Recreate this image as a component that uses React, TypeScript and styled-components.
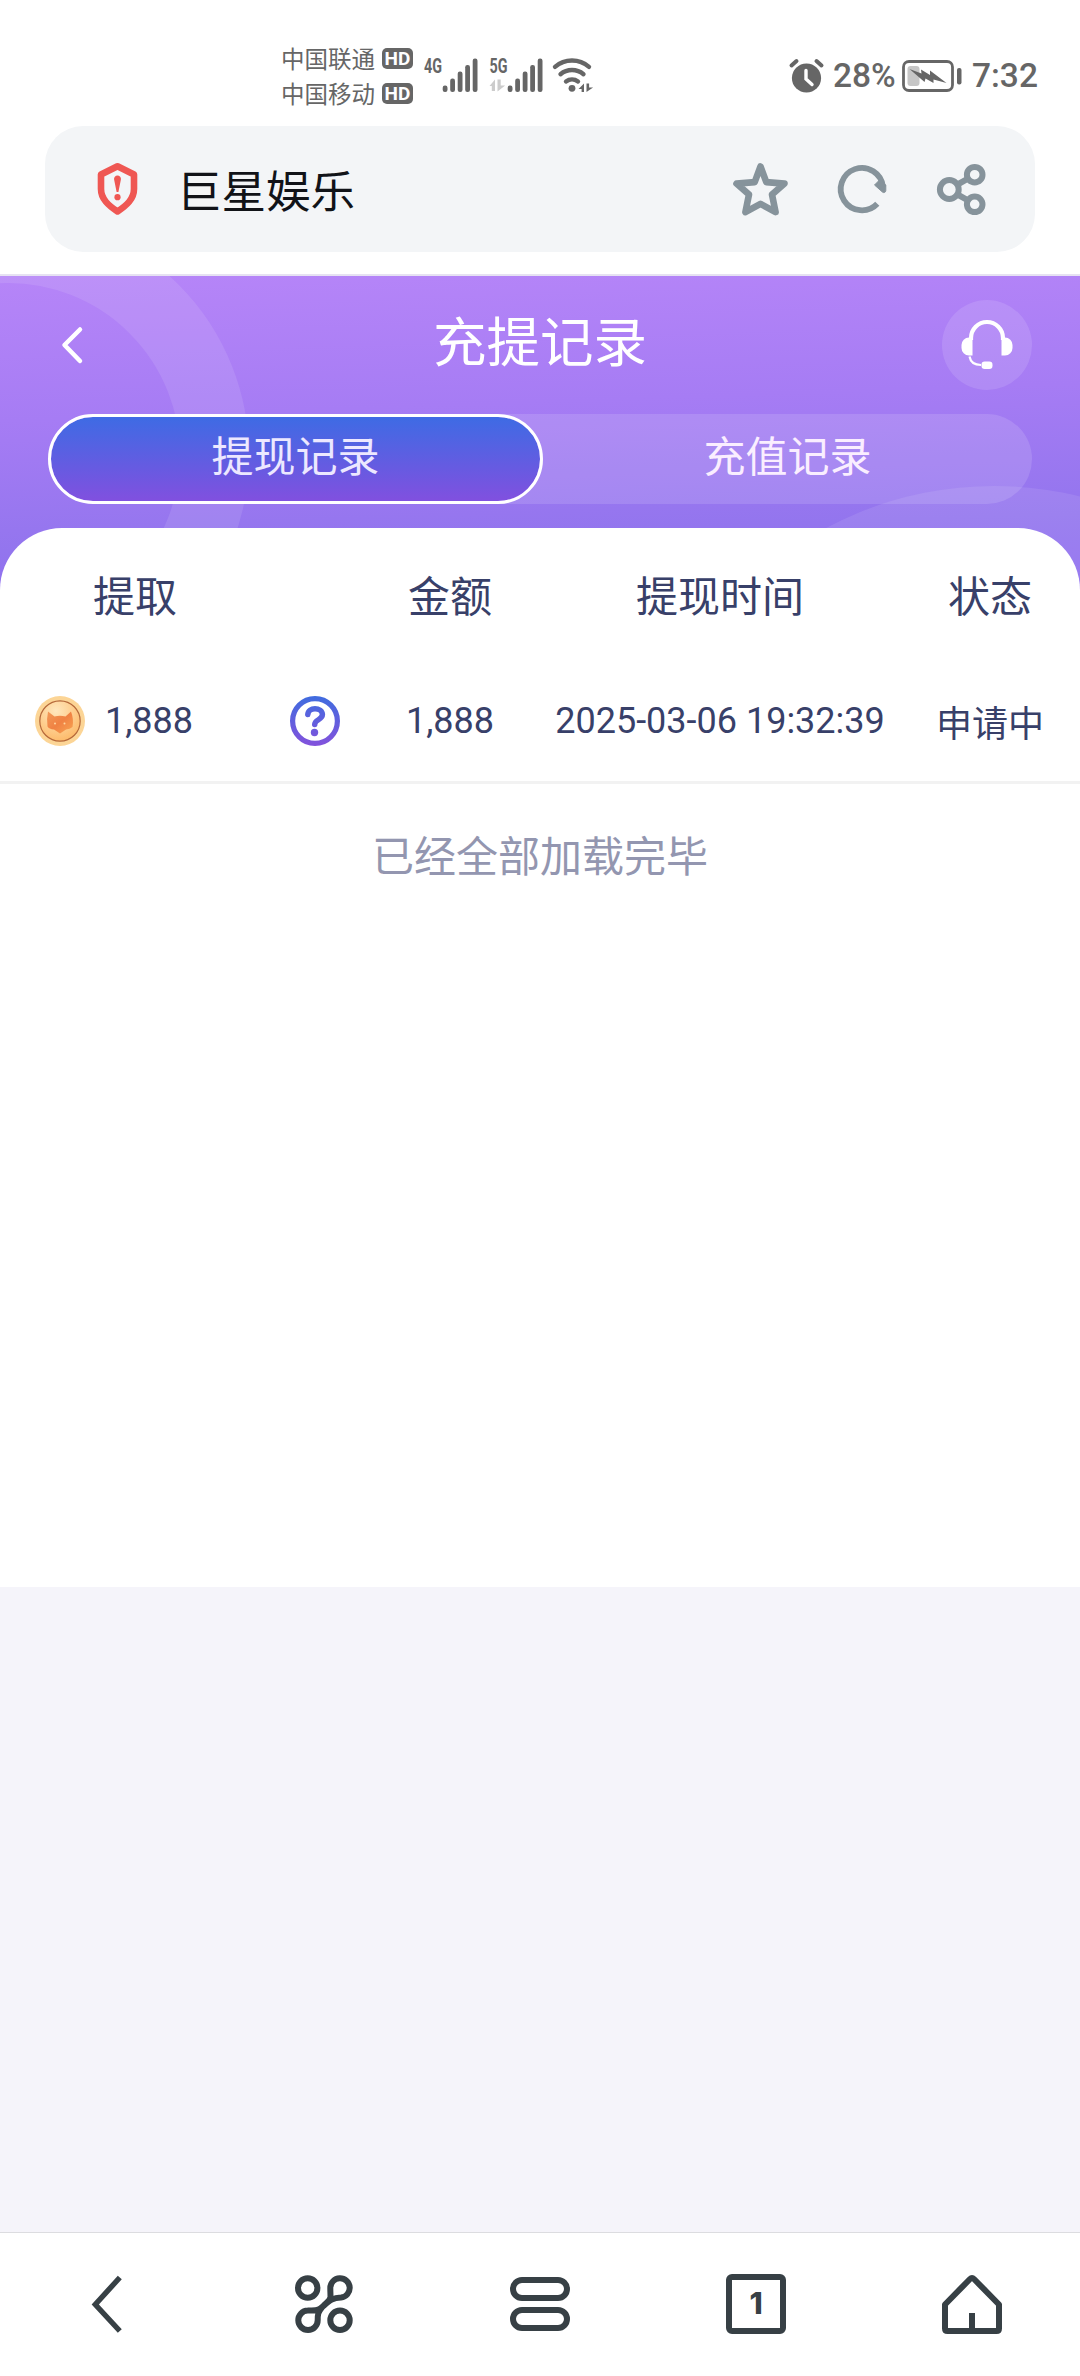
import React from "react";
import styled, { createGlobalStyle } from "styled-components";

const GlobalStyle = createGlobalStyle`
  * { box-sizing: border-box; }
  body {
    margin: 0;
    background: #f5f4fa;
    font-family: "Noto Sans CJK SC", sans-serif;
  }
`;

const Screen = styled.div`
  display: flex;
  flex-direction: column;
  width: 1080px;
  height: 2376px;
  overflow: hidden;
  background: #f5f4fa;
`;

const Icon = styled.svg`
  display: block;
  flex: none;
  overflow: visible;
`;

/* Status bar */

const StatusBar = styled.div`
  display: flex;
  height: 126px;
  padding: 41px 42px 0 281px;
  background: #fff;
  color: #666;
`;

const Carriers = styled.div`
  display: flex;
  flex-direction: column;
`;

const Carrier = styled.div`
  display: flex;
  align-items: center;
  gap: 7px;
  height: 35px;
  font-size: 23.5px;
  line-height: 35px;
`;

const HdBadge = styled.span`
  width: 31px;
  height: 21px;
  border-radius: 5px;
  background: #666;
  color: #fff;
  font: 700 19px/21px Roboto, sans-serif;
  text-align: center;
`;

const SignalIcons = styled.div`
  padding: 17px 0 0 11px;
`;

const StatusRight = styled.div`
  display: flex;
  align-items: center;
  height: 34px;
  margin: 18px 0 0 auto;
`;

const StatusText = styled.span<{ $width: number; $gap: number }>`
  width: ${(p) => p.$width}px;
  margin-left: ${(p) => p.$gap}px;
  font: 500 33.5px/34px Roboto, sans-serif;
  white-space: nowrap;
`;

const Battery = styled(Icon)`
  margin-left: 7px;
`;

/* Address bar */

const AddressArea = styled.div`
  height: 150px;
  padding: 0 45px;
  background: #fff;
  border-bottom: 2px solid #e6e2f2;
`;

const AddressBar = styled.div`
  display: flex;
  align-items: center;
  height: 126px;
  padding: 0 49px 0 52px;
  border-radius: 38px;
  background: #f3f5f7;
`;

const SiteName = styled.span`
  margin: 0 auto 0 39px;
  color: #111318;
  font-size: 44.5px;
  line-height: 60px;
`;

const AddressActions = styled.div`
  display: flex;
  align-items: center;
  gap: 50px;
`;

/* Page header */

const Header = styled.header`
  position: relative;
  height: 324px;
  padding-top: 24px;
  background: linear-gradient(178deg, #b685f8 0%, #a67cf4 40%, #9375ee 76%, #8c6bf0 100%);
`;

const HeaderArt = styled.svg`
  position: absolute;
  inset: 0;
`;

const TitleRow = styled.div`
  position: relative;
  display: grid;
  grid-template-columns: 90px 1fr 90px;
  align-items: center;
  height: 90px;
  padding: 0 48px;
`;

const BackButton = styled.button`
  display: flex;
  padding: 0 0 0 14px;
  border: 0;
  background: none;
`;

const Title = styled.h1`
  margin: -12px 0 0;
  color: #fff;
  font-size: 53.5px;
  font-weight: 400;
  line-height: 80px;
  text-align: center;
`;

const SupportButton = styled.button`
  display: flex;
  align-items: center;
  justify-content: center;
  width: 90px;
  height: 90px;
  padding: 0;
  border: 0;
  border-radius: 50%;
  background: rgba(255, 255, 255, 0.12);
`;

const Tabs = styled.nav`
  position: relative;
  display: flex;
  height: 90px;
  margin: 24px 48px 0;
  border-radius: 45px;
  background: rgba(255, 255, 255, 0.13);
`;

const Tab = styled.button<{ $active?: boolean }>`
  width: ${(p) => (p.$active ? 495 : 489)}px;
  height: 90px;
  padding: 0 0 10px;
  border: 3px solid ${(p) => (p.$active ? "#fff" : "transparent")};
  border-radius: 45px;
  background: ${(p) => (p.$active ? "linear-gradient(180deg, #3e6be4, #8150df) padding-box" : "none")};
  color: ${(p) => (p.$active ? "#ece8ff" : "#faeeff")};
  font-family: inherit;
  font-size: 42px;
  line-height: 60px;
`;

/* Records */

const Panel = styled.main`
  position: relative;
  height: 1059px;
  margin-top: -72px;
  border-radius: 62px 62px 0 0;
  background: #fff;
`;

const Row = styled.div`
  display: grid;
  grid-template-columns: 270px 90px 180px 360px 180px;
  align-items: center;
  justify-items: center;
  color: #384069;
`;

const HeadRow = styled(Row)`
  height: 136px;
  padding-bottom: 4px;
  font-size: 42px;
  line-height: 60px;
`;

const RecordRow = styled(Row)`
  height: 120px;
  padding-bottom: 3px;
  border-bottom: 3px solid #f2f2f2;
  font-family: Roboto, "Noto Sans CJK SC", sans-serif;
  font-size: 36px;
  line-height: 50px;
`;

const Amount = styled.div`
  display: flex;
  align-items: center;
  justify-self: start;
  gap: 20px;
  padding-left: 35px;
`;

const StatusCell = styled.span`
  font-family: "Noto Sans CJK SC", sans-serif;
`;

const EndNote = styled.p`
  margin: 40px 0 0;
  color: #9396b0;
  font-size: 42px;
  line-height: 60px;
  text-align: center;
`;

/* Browser toolbar */

const Toolbar = styled.footer`
  display: grid;
  grid-template-columns: repeat(5, 1fr);
  justify-items: center;
  height: 144px;
  margin-top: auto;
  padding-top: 41px;
  border-top: 1px solid #dcdce0;
  background: #fff;
`;

const TabCount = styled.span`
  width: 60px;
  height: 60px;
  border: 6px solid #374045;
  border-radius: 6px;
  color: #374045;
  font: 800 30px/47px Inter, sans-serif;
  text-align: center;
`;

const barHeights = [6.5, 13.5, 20.5, 27, 33.5];

const Bars = ({ x }: { x: number }) => (
  <g>
    {barHeights.map((h, i) => (
      <rect key={h} x={x + i * 7.5} y={34 - h} width="4.8" height={h} rx="2.2" />
    ))}
  </g>
);

const Signals = () => (
  <Icon width="169" height="34" viewBox="0 0 169 34" fill="#666">
    <text x="0" y="14.5" fontFamily="Roboto" fontWeight="700" fontSize="19.5" textLength="18" lengthAdjust="spacingAndGlyphs">4G</text>
    <Bars x={18.7} />
    <text x="65.5" y="14.5" fontFamily="Roboto" fontWeight="700" fontSize="19.5" textLength="18" lengthAdjust="spacingAndGlyphs">5G</text>
    <path d="M65.5 28 71 21.5v11.5h-3.2v-5zM73.5 21.5h3.2v6h4.5L73.5 33.5z" fill="#ccc" />
    <Bars x={83.7} />
    <g fill="none" stroke="#666" strokeWidth="4.4" strokeLinecap="round">
      <path d="M131 8.8a26 26 0 0 1 34 0" />
      <path d="M136.5 16.2a18 18 0 0 1 23 0" />
      <path d="M142 23.5a10 10 0 0 1 12 0" />
    </g>
    <circle cx="148" cy="30.3" r="3.4" />
    <path d="M154.5 31 160 25.5v8.5h-2.4v-3zM162.5 25.5h2.6v4h4L162.5 34z" />
  </Icon>
);

const AlarmIcon = () => (
  <Icon width="35" height="34" viewBox="0 0 35 34">
    <circle cx="17.5" cy="19" r="14.6" fill="#666" />
    <path d="M2.5 6.5 7.5 2M32.5 6.5 27.5 2" stroke="#666" strokeWidth="4" strokeLinecap="round" />
    <path d="M17 11.5v8.5l6 5.5" fill="none" stroke="#fff" strokeWidth="3.4" strokeLinecap="round" />
  </Icon>
);

const BatteryIcon = () => (
  <Battery width="60" height="32" viewBox="0 0 60 32">
    <rect x="1.5" y="1.5" width="49" height="29" rx="5.5" fill="none" stroke="#666" strokeWidth="2.8" />
    <rect x="5.5" y="6" width="12" height="20" rx="3" fill="#c6c6c6" />
    <path d="M7.5 9 19.5 13.5 19 9.500 28 15 28 10.500 44.500 23 31.500 19.500 31.500 23 23.500 18.500 22.500 22z" fill="#666" />
    <rect x="55" y="8" width="4.5" height="16.5" rx="2" fill="#666" />
  </Battery>
);

const ShieldIcon = () => (
  <Icon width="41" height="52" viewBox="0 0 41 52">
    <path d="M20.5 3.2 37 11.5v14.5C37 36 29.5 42.5 20.5 48.5 11.5 42.5 4 36 4 26V11.5z" fill="none" stroke="#ef5753" strokeWidth="6.6" strokeLinejoin="round" />
    <path d="M20.5 12.5a3.4 3.4 0 0 1 3.4 4L21.4 29h-1.8l-2.5-12.5a3.4 3.4 0 0 1 3.4-4z" fill="#ef5753" />
    <circle cx="20.5" cy="34.2" r="3.1" fill="#ef5753" />
  </Icon>
);

const StarIcon = () => (
  <Icon width="55" height="53" viewBox="0 0 55 53" fill="none" stroke="#86939b" strokeWidth="6.6" strokeLinejoin="round">
    <path d="M27.5 3.5 33.3 19.1 51.5 20.6 39 31.5 42.6 49.1 27.5 40.8 12.4 49.1 16 31.5 3.5 20.6 21.7 19.1z" />
  </Icon>
);

const RefreshIcon = () => (
  <Icon width="49" height="49" viewBox="0 0 49 49">
    <path d="M39.3 38.7A21.2 21.2 0 1 1 45 22" fill="none" stroke="#86939b" strokeWidth="5.8" />
    <path d="M36.5 20 42 14.5 47.8 20v5.5a2 2 0 0 1-3.4 1.5z" fill="#86939b" stroke="#86939b" strokeLinejoin="round" />
  </Icon>
);

const ShareIcon = () => (
  <Icon width="49" height="51" viewBox="0 0 49 51" fill="none" stroke="#86939b" strokeWidth="6">
    <circle cx="12.3" cy="25.5" r="9.4" />
    <circle cx="37.7" cy="10.7" r="7.8" />
    <circle cx="37.7" cy="40.3" r="7.8" />
    <path d="M20.5 20.5 31 14.7M20.5 30.5 31 36.3" />
  </Icon>
);

const SupportIcon = () => (
  <Icon width="52" height="50" viewBox="0 0 52 50">
    <path d="M10 20v-2a16 16 0 0 1 32 0v2" fill="none" stroke="#fff" strokeWidth="4.2" />
    <path d="M11.5 17.5v18H8A7.5 7.5 0 0 1 .5 28v-3A7.5 7.5 0 0 1 8 17.5zM40.5 17.5v18H44a7.5 7.5 0 0 0 7.5-7.5v-3a7.5 7.5 0 0 0-7.5-7.5z" fill="#fff" />
    <path d="M8.5 36.5C9.5 42 13.5 45 20 45" fill="none" stroke="#fff" strokeWidth="2.2" />
    <rect x="20.5" y="41.5" width="11" height="7.5" rx="3.2" fill="#fff" />
  </Icon>
);

const CoinIcon = () => (
  <Icon width="50" height="50" viewBox="0 0 50 50">
    <defs>
      <radialGradient id="coin" cx="40%" cy="25%" r="80%">
        <stop offset="0" stopColor="#ffe7bd" />
        <stop offset="1" stopColor="#fdb866" />
      </radialGradient>
      <linearGradient id="fox" x1="0" y1="0" x2="1" y2="1">
        <stop offset="0" stopColor="#f29a58" />
        <stop offset=".5" stopColor="#f08243" />
        <stop offset="1" stopColor="#f9a452" />
      </linearGradient>
    </defs>
    <circle cx="25" cy="25" r="25" fill="#fcd596" />
    <circle cx="25" cy="25" r="20.2" fill="url(#coin)" stroke="#b5683a" strokeWidth="1.2" />
    <path d="M13 15.5 19.5 20.5Q25 19 30.5 20.5L36 15.5Q39 23 37.5 31 35 33 31 33.5L25 37.5 19 33.5Q14 33 12.5 30.5 11.5 22 13 15.5z" fill="url(#fox)" />
    <circle cx="20" cy="27.5" r="1" fill="#ffd7a0" />
    <circle cx="29.5" cy="27.5" r="1" fill="#ffd7a0" />
  </Icon>
);

const HelpIcon = () => (
  <Icon width="50" height="50" viewBox="0 0 50 50" fill="none" stroke="url(#help)">
    <defs>
      <linearGradient id="help" gradientUnits="userSpaceOnUse" x1="0" y1="0" x2="0" y2="50">
        <stop offset="0" stopColor="#3f6cdf" />
        <stop offset="1" stopColor="#8352dc" />
      </linearGradient>
    </defs>
    <circle cx="25" cy="25" r="22.4" strokeWidth="5.2" />
    <path d="M17.8 18.5c.3-4 3.5-5.8 7.2-5.8s7.4 2 7.4 5.9c0 5.3-7.7 5-7.7 9.9" strokeWidth="5.5" strokeLinecap="round" />
    <circle cx="24.5" cy="36.5" r="3.7" fill="url(#help)" stroke="none" />
  </Icon>
);

const BrowserToolbar = () => (
  <Toolbar>
    <Icon width="60" height="60" viewBox="0 0 60 60" fill="none" stroke="#374045" strokeWidth="5.4">
      <path d="M41.8 3.5 17.3 30.5 41.8 57" />
    </Icon>
    <Icon width="60" height="60" viewBox="0 0 60 60" fill="none" stroke="#374045" strokeWidth="6">
      <circle cx="13.7" cy="14" r="9.7" />
      <circle cx="46" cy="46.3" r="9.7" />
      <path d="M36.5 23C36.5 20 36.3 17 36.3 14a9.7 9.7 0 1 1 10.7 9.6C39 23.8 36 26 30 31.5S23 36 13.7 36.6a9.7 9.7 0 1 0 10 9.700C23.7 40 24 38.500 28 33.500S36 27.500 36.500 23z" />
    </Icon>
    <Icon width="60" height="60" viewBox="0 0 60 60" fill="none" stroke="#374045" strokeWidth="6">
      <rect x="3" y="6" width="54" height="18" rx="9" />
      <rect x="3" y="36" width="54" height="18" rx="9" />
    </Icon>
    <TabCount>1</TabCount>
    <Icon width="60" height="60" viewBox="0 0 60 60" fill="none" stroke="#374045" strokeWidth="6" strokeLinejoin="round">
      <path d="M3 30.5 28 5Q30 3 32 5L57 30.5V54.5Q57 57 54.5 57H5.5Q3 57 3 54.5zM30 57V39" />
    </Icon>
  </Toolbar>
);

export default function App() {
  return (
    <Screen>
      <GlobalStyle />
      <StatusBar>
        <Carriers>
          <Carrier>中国联通<HdBadge>HD</HdBadge></Carrier>
          <Carrier>中国移动<HdBadge>HD</HdBadge></Carrier>
        </Carriers>
        <SignalIcons><Signals /></SignalIcons>
        <StatusRight>
          <AlarmIcon />
          <StatusText $width={62} $gap={9}>28%</StatusText>
          <BatteryIcon />
          <StatusText $width={66} $gap={10}>7:32</StatusText>
        </StatusRight>
      </StatusBar>
      <AddressArea>
        <AddressBar>
          <ShieldIcon />
          <SiteName>巨星娱乐</SiteName>
          <AddressActions>
            <StarIcon />
            <RefreshIcon />
            <ShareIcon />
          </AddressActions>
        </AddressBar>
      </AddressArea>
      <Header>
        <HeaderArt width="1080" height="324" viewBox="0 276 1080 324" fill="none">
          <circle cx="8" cy="455" r="206.5" stroke="#fff" strokeOpacity=".1" strokeWidth="69" />
          <circle cx="994" cy="843" r="357" fill="#fff" fillOpacity=".09" />
        </HeaderArt>
        <TitleRow>
          <BackButton aria-label="返回">
            <Icon width="21" height="36" viewBox="0 0 21 36" fill="none" stroke="#fff" strokeWidth="4.5" strokeLinecap="round" strokeLinejoin="round">
              <path d="M18 2.5 2.5 18 18 34" />
            </Icon>
          </BackButton>
          <Title>充提记录</Title>
          <SupportButton aria-label="客服"><SupportIcon /></SupportButton>
        </TitleRow>
        <Tabs>
          <Tab $active>提现记录</Tab>
          <Tab>充值记录</Tab>
        </Tabs>
      </Header>
      <Panel>
        <HeadRow>
          <span>提取</span>
          <span />
          <span>金额</span>
          <span>提现时间</span>
          <span>状态</span>
        </HeadRow>
        <RecordRow>
          <Amount><CoinIcon />1,888</Amount>
          <HelpIcon />
          <span>1,888</span>
          <span>2025-03-06 19:32:39</span>
          <StatusCell>申请中</StatusCell>
        </RecordRow>
        <EndNote>已经全部加载完毕</EndNote>
      </Panel>
      <BrowserToolbar />
    </Screen>
  );
}
